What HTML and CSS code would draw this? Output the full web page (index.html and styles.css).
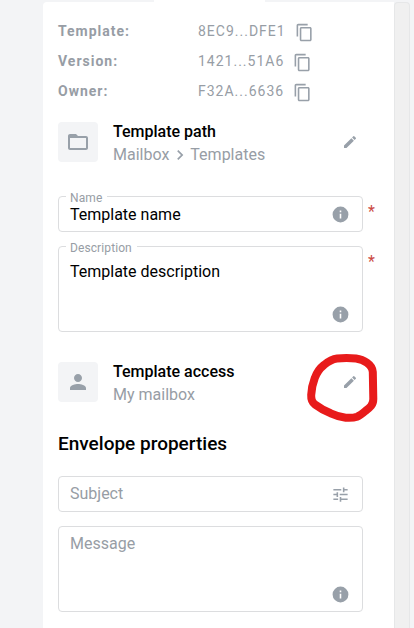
FILE: index.html
```html
<!DOCTYPE html>
<html lang="en">
<head>
<meta charset="utf-8">
<title>Template</title>
<link rel="stylesheet" href="styles.css">
</head>
<body>
<svg class="defs" aria-hidden="true">
  <symbol id="copy" viewBox="0 0 24 24"><path d="M16 1H4c-1.100 0-2 .9-2 2v14h2V3h12V1zm3 4H8c-1.100 0-2 .9-2 2v14c0 1.100.9 2 2 2h11c1.100 0 2-.9 2-2V7c0-1.100-.9-2-2-2zm0 16H8V7h11v14z"/></symbol>
  <symbol id="folder" viewBox="0 0 24 24"><path d="M20 6h-8l-2-2H4c-1.100 0-1.990.9-1.990 2L2 18c0 1.100.9 2 2 2h16c1.100 0 2-.9 2-2V8c0-1.100-.9-2-2-2zm0 12H4V8h16v10z"/></symbol>
  <symbol id="person" viewBox="0 0 24 24"><path d="M12 12c2.210 0 4-1.790 4-4s-1.790-4-4-4-4 1.790-4 4 1.790 4 4 4zm0 2c-2.670 0-8 1.340-8 4v2h16v-2c0-2.660-5.330-4-8-4z"/></symbol>
  <symbol id="edit" viewBox="0 0 24 24"><path d="M3 17.250V21h3.750L17.810 9.940l-3.750-3.750L3 17.250zM20.710 7.040a1 1 0 0 0 0-1.410l-2.340-2.340a1 1 0 0 0-1.410 0l-1.830 1.830 3.750 3.750 1.830-1.830z"/></symbol>
  <symbol id="chevron" viewBox="0 0 24 24"><path d="M10 6 8.590 7.410 13.170 12l-4.580 4.590L10 18l6-6z"/></symbol>
  <symbol id="info" viewBox="0 0 24 24"><path d="M12 2a10 10 0 1 0 0 20 10 10 0 0 0 0-20zm1 15h-2v-6h2v6zm0-8h-2V7h2v2z"/></symbol>
  <symbol id="tune" viewBox="0 0 24 24"><path d="M3 17v2h6v-2H3zM3 5v2h10V5H3zm10 16v-2h8v-2h-8v-2h-2v6h2zM7 9v2H3v2h4v2h2V9H7zm14 4v-2H11v2h10zm-6-4h2V7h4V5h-4V3h-2v6z"/></symbol>
</svg>
<div class="app">
  <div class="tab"></div>
  <main class="panel">
    <dl class="meta">
      <div class="meta-row"><dt>Template:</dt><dd>8EC9...DFE1<svg><use href="#copy"/></svg></dd></div>
      <div class="meta-row"><dt>Version:</dt><dd>1421...51A6<svg><use href="#copy"/></svg></dd></div>
      <div class="meta-row"><dt>Owner:</dt><dd>F32A...6636<svg><use href="#copy"/></svg></dd></div>
    </dl>
    <section class="item path">
      <div class="tile"><svg><use href="#folder"/></svg></div>
      <div class="item-text">
        <div class="item-title">Template path</div>
        <div class="item-sub">Mailbox<svg class="chev"><use href="#chevron"/></svg>Templates</div>
      </div>
      <svg class="edit"><use href="#edit"/></svg>
    </section>
    <div class="field name">
      <span class="label">Name</span>
      <span class="value">Template name</span>
      <svg class="hint"><use href="#info"/></svg>
      <span class="req">*</span>
    </div>
    <div class="field area">
      <span class="label">Description</span>
      <span class="value">Template description</span>
      <svg class="hint"><use href="#info"/></svg>
      <span class="req">*</span>
    </div>
    <section class="item access">
      <div class="tile"><svg><use href="#person"/></svg></div>
      <div class="item-text">
        <div class="item-title">Template access</div>
        <div class="item-sub">My mailbox</div>
      </div>
      <svg class="edit"><use href="#edit"/></svg>
      <svg class="marker" viewBox="0 0 80 74"><path d="M31 8.500C37 8 44 8 50 8.500C54 9 58 10.500 61 12.700C65 15.500 66.500 18 66.800 22L67.300 49C67.300 55 64 57.500 59.700 60.700C57 63 54 65.500 51 66.700C48 67.800 44 68 39.700 67.700C34 67 29.500 65.500 24.700 63.300C19 61 13 57.500 9 54.500C5.500 52 5 49 5.200 45C5.500 39 6.500 34 8.700 28.300C10.500 23 13.500 18.500 18 15C22.500 11.300 26.500 9 31 8.500Z"/></svg>
    </section>
    <h2>Envelope properties</h2>
    <div class="field subject">
      <span class="value placeholder">Subject</span>
      <svg class="hint"><use href="#tune"/></svg>
    </div>
    <div class="field area">
      <span class="value placeholder">Message</span>
      <svg class="hint"><use href="#info"/></svg>
    </div>
  </main>
  <div class="scrollbar"></div>
</div>
</body>
</html>
```
FILE: styles.css
```css
* { box-sizing: border-box; }
body {
  margin: 0;
  background: #f3f4f6;
  font: 16px/24px Roboto, sans-serif;
  color: #000;
}
svg { fill: #98a0a9; flex: none; }
.defs { display: none; }
.app {
  position: relative;
  display: flex;
  height: 628px;
  padding: 2px 4px 0 43px;
  overflow: hidden;
}
.tab {
  position: absolute;
  top: 0;
  left: 154px;
  width: 111px;
  height: 2px;
  background: #fff;
}
.panel {
  width: 351px;
  padding: 14px 31px 0 15px;
  background: #fff;
  border-radius: 4px 0 0 0;
}
.scrollbar {
  width: 16px;
  background: #f0f0f0;
  border: 1px solid #e6e7e8;
  border-bottom: 0;
  border-radius: 4px 4px 0 0;
}
.meta { margin: 0; }
.meta-row {
  display: flex;
  align-items: center;
  height: 30px;
  font-size: 14px;
  letter-spacing: 1px;
  color: #979da5;
}
.meta dt { width: 140px; font-weight: 700; }
.meta dd { display: flex; align-items: center; margin: 0; }
.meta svg { width: 19px; height: 19px; margin: 2px 0 0 9px; }
.item {
  position: relative;
  display: flex;
  align-items: center;
  height: 46px;
}
.path { margin-top: 13px; }
.access { margin-top: 27px; }
.tile {
  display: flex;
  align-items: center;
  justify-content: center;
  width: 40px;
  height: 40px;
  margin-right: 15px;
  background: #f3f4f6;
  border-radius: 4px;
}
.tile svg { width: 24px; height: 24px; }
.item-text { flex: 1; padding-top: 2px; line-height: 23px; }
.item-title { font-weight: 500; }
.item-sub { display: flex; align-items: center; color: #979da5; }
.chev { width: 20px; height: 20px; margin: 0 .5px; }
.edit { width: 16px; height: 16px; margin-right: 5px; }
.marker {
  position: absolute;
  left: 248px;
  top: -9px;
  width: 80px;
  height: 74px;
}
.marker path {
  fill: none;
  stroke: #e81b1b;
  stroke-width: 8;
  stroke-linejoin: round;
}
.field {
  position: relative;
  display: flex;
  justify-content: space-between;
  align-items: center;
  height: 36px;
  padding: 0 12.5px 0 11px;
  border: 1px solid #dcdddf;
  border-radius: 4px;
}
.name { margin-top: 31px; }
.name .value { padding-top: 2px; }
.subject .value { padding-bottom: 1px; }
.area {
  align-items: flex-start;
  height: 86px;
  margin-top: 14px;
  padding-top: 5px;
}
.area .hint { align-self: flex-end; margin-bottom: 7px; }
.area .label + .value { margin-top: 8px; }
.hint { width: 19px; height: 19px; }
.label {
  position: absolute;
  top: -6px;
  left: 7px;
  padding: 0 5px 0 4px;
  background: #fff;
  font-size: 12px;
  line-height: 14px;
  letter-spacing: .1px;
  color: #979da5;
}
.placeholder { color: #979da5; }
.req {
  position: absolute;
  top: 3px;
  right: -13px;
  color: #cb4a43;
}
h2 {
  margin: 25px 0 18px;
  font-size: 19px;
  font-weight: 500;
  line-height: 28px;
}
```
